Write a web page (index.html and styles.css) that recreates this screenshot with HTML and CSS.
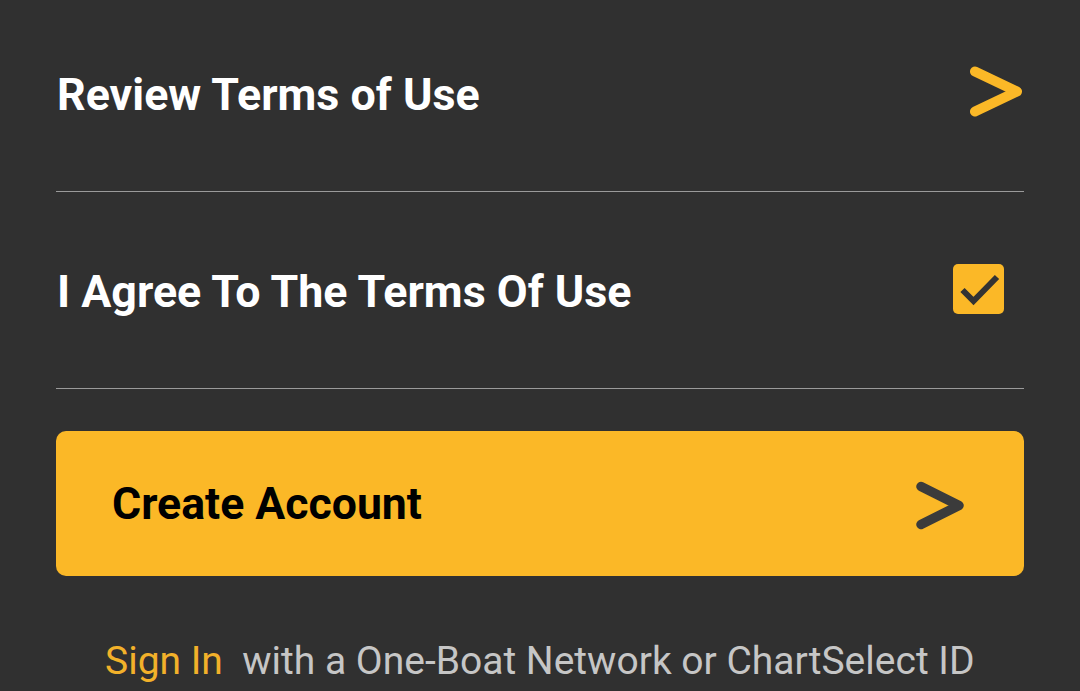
FILE: index.html
```html
<!DOCTYPE html>
<html>
<head>
<meta charset="utf-8">
<link rel="stylesheet" href="styles.css">
</head>
<body>
<div class="page">
  <div class="row">
    <span class="row-label label-review">Review Terms of Use</span>
    <svg class="chev" width="56" height="56" viewBox="0 0 56 56">
      <path d="M5 5.5 L47 25.5 L5 45.5" fill="none" stroke="#fbb827" stroke-width="10" stroke-linecap="round" stroke-linejoin="round"/>
    </svg>
  </div>
  <div class="row row-agree">
    <span class="row-label label-agree">I Agree To The Terms Of Use</span>
    <span class="checkbox">
      <svg width="51" height="50" viewBox="0 0 51 50">
        <path d="M9.5 26 L20.5 37 L44 13" fill="none" stroke="#333333" stroke-width="6"/>
      </svg>
    </span>
  </div>
  <div class="btn">
    <span class="btn-label">Create Account</span>
    <svg class="btn-chev" width="56" height="56" viewBox="0 0 56 56">
      <path d="M9 10.5 L47 29.5 L9 48.5" fill="none" stroke="#3b3b3b" stroke-width="9.5" stroke-linecap="round" stroke-linejoin="round"/>
    </svg>
  </div>
  <p class="signin"><span class="signin-link">Sign In</span>&nbsp; with a One-Boat Network or ChartSelect ID</p>
</div>
</body>
</html>
```
FILE: styles.css
```css
html, body {
  margin: 0;
  padding: 0;
  background: #303030;
}
body {
  font-family: Roboto, "Noto Sans", sans-serif;
  width: 1080px;
  height: 691px;
  overflow: hidden;
}
.page {
  padding: 0 56px;
}
.row {
  height: 191px;
  border-bottom: 1px solid #9a9a9a;
  display: flex;
  align-items: center;
  justify-content: space-between;
}
.row-agree {
  height: 196px;
}
.row-label {
  color: #ffffff;
  font-weight: 700;
  font-size: 44.8px;
  padding-left: 1px;
}
.label-review {
  margin-top: -3px;
}
.label-agree {
  margin-top: 3px;
}
.chev {
  margin-right: -2px;
  margin-top: -4px;
}
.checkbox {
  width: 51px;
  height: 50px;
  background: #fbb827;
  border-radius: 5px;
  margin-right: 20px;
  margin-top: -3px;
  display: flex;
}
.btn {
  margin-top: 42px;
  height: 145px;
  background: #fbb827;
  border-radius: 10px;
  display: flex;
  align-items: center;
  justify-content: space-between;
  padding: 0 56px 0 56px;
}
.btn-label {
  color: #000000;
  font-weight: 700;
  font-size: 44.6px;
}
.signin {
  margin: 62px 0 0 0;
  font-size: 39px;
  color: #c6c6c6;
  padding-left: 49px;
  white-space: nowrap;
}
.signin-link {
  color: #f2b12a;
}
```
